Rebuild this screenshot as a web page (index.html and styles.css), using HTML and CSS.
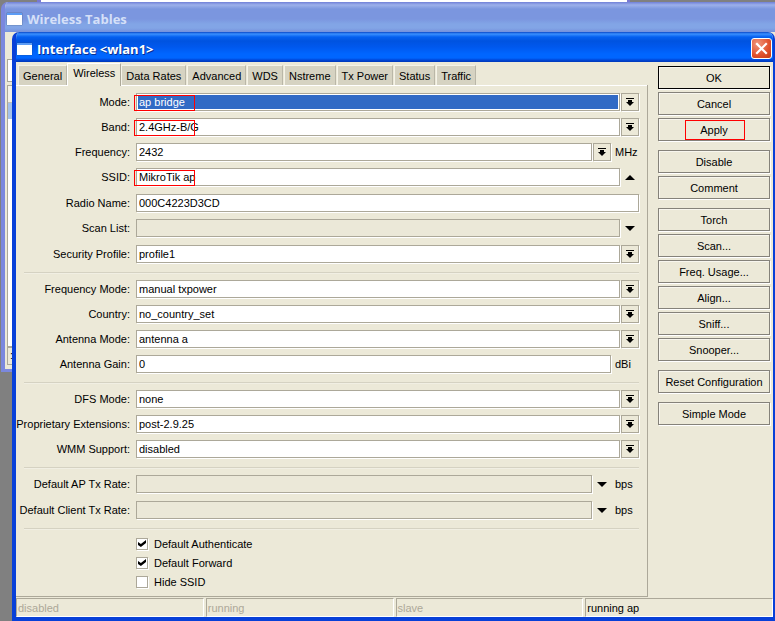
FILE: index.html
```html
<!DOCTYPE html>
<html lang="en">
<head>
<meta charset="utf-8">
<title>Interface &lt;wlan1&gt;</title>
<link rel="stylesheet" href="styles.css">
</head>
<body>
<div class="strip"></div>
<section class="back-window">
  <header class="titlebar inactive"><span class="app-icon"></span><h2>Wireless Tables</h2></header>
  <div class="back-body">
    <div class="back-tool"></div>
    <div class="back-list"><div class="back-head"></div><div class="back-selected"></div></div>
    <div class="back-status">:</div>
  </div>
</section>

<main class="window">
  <header class="titlebar">
    <span class="app-icon"></span><h1>Interface &lt;wlan1&gt;</h1>
    <button class="close" aria-label="Close"><svg viewBox="0 0 19 19" width="19" height="19"><path d="M5 5l9 9M14 5l-9 9" stroke="#fff" stroke-width="2.2" stroke-linecap="square"/></svg></button>
  </header>

  <div class="content">
    <div class="pane">
      <nav class="tabs">
        <button class="tab">General</button>
        <button class="tab active">Wireless</button>
        <button class="tab">Data Rates</button>
        <button class="tab">Advanced</button>
        <button class="tab">WDS</button>
        <button class="tab">Nstreme</button>
        <button class="tab">Tx Power</button>
        <button class="tab">Status</button>
        <button class="tab">Traffic</button>
      </nav>
      <form class="sheet">
        <div class="group">
          <div class="row marked"><label for="mode">Mode:</label><div class="field"><select id="mode" class="selected"><option>ap bridge</option></select><button type="button" class="drop" aria-label="Open mode"></button></div></div>
          <div class="row marked"><label for="band">Band:</label><div class="field"><select id="band"><option>2.4GHz-B/G</option></select><button type="button" class="drop" aria-label="Open band"></button></div></div>
          <div class="row"><label for="freq">Frequency:</label><div class="field"><select id="freq"><option>2432</option></select><button type="button" class="drop" aria-label="Open frequency"></button></div><span class="unit">MHz</span></div>
          <div class="row marked optional"><label for="ssid">SSID:</label><div class="field"><input id="ssid" type="text" value="MikroTik ap"><button type="button" class="toggle up" aria-label="Clear SSID"></button></div></div>
          <div class="row"><label for="radio">Radio Name:</label><div class="field"><input id="radio" type="text" value="000C4223D3CD"></div></div>
          <div class="row optional"><label for="scan">Scan List:</label><div class="field"><input id="scan" type="text" class="unset"><button type="button" class="toggle" aria-label="Set scan list"></button></div></div>
          <div class="row"><label for="sec">Security Profile:</label><div class="field"><select id="sec"><option>profile1</option></select><button type="button" class="drop" aria-label="Open security profile"></button></div></div>
        </div>
        <div class="group">
          <div class="row"><label for="fmode">Frequency Mode:</label><div class="field"><select id="fmode"><option>manual txpower</option></select><button type="button" class="drop" aria-label="Open frequency mode"></button></div></div>
          <div class="row"><label for="country">Country:</label><div class="field"><select id="country"><option>no_country_set</option></select><button type="button" class="drop" aria-label="Open country"></button></div></div>
          <div class="row"><label for="amode">Antenna Mode:</label><div class="field"><select id="amode"><option>antenna a</option></select><button type="button" class="drop" aria-label="Open antenna mode"></button></div></div>
          <div class="row"><label for="gain">Antenna Gain:</label><div class="field"><input id="gain" type="text" value="0"></div><span class="unit">dBi</span></div>
        </div>
        <div class="group">
          <div class="row"><label for="dfs">DFS Mode:</label><div class="field"><select id="dfs"><option>none</option></select><button type="button" class="drop" aria-label="Open DFS mode"></button></div></div>
          <div class="row"><label for="ext">Proprietary Extensions:</label><div class="field"><select id="ext"><option>post-2.9.25</option></select><button type="button" class="drop" aria-label="Open extensions"></button></div></div>
          <div class="row"><label for="wmm">WMM Support:</label><div class="field"><select id="wmm"><option>disabled</option></select><button type="button" class="drop" aria-label="Open WMM support"></button></div></div>
        </div>
        <div class="group">
          <div class="row optional"><label for="aprate">Default AP Tx Rate:</label><div class="field"><input id="aprate" type="text" class="unset"><button type="button" class="toggle" aria-label="Set AP rate"></button></div><span class="unit">bps</span></div>
          <div class="row"><label for="clrate">Default Client Tx Rate:</label><div class="field"><input id="clrate" type="text" class="unset"><button type="button" class="toggle" aria-label="Set client rate"></button></div><span class="unit">bps</span></div>
        </div>
        <div class="group checks">
          <label><input type="checkbox" checked>Default Authenticate</label>
          <label><input type="checkbox" checked>Default Forward</label>
          <label><input type="checkbox">Hide SSID</label>
        </div>
      </form>
    </div>
    <aside class="actions">
      <div><button class="default">OK</button><button>Cancel</button><button class="apply">Apply</button></div>
      <div><button>Disable</button><button>Comment</button></div>
      <div><button>Torch</button><button>Scan...</button><button>Freq. Usage...</button><button>Align...</button><button>Sniff...</button><button>Snooper...</button></div>
      <div><button>Reset Configuration</button></div>
      <div><button>Simple Mode</button></div>
    </aside>
  </div>

  <footer class="status"><span>disabled</span><span>running</span><span>slave</span><span class="on">running ap</span></footer>
</main>
</body>
</html>
```
FILE: styles.css
```css
*, *::before, *::after { box-sizing: border-box; }
body {
  margin: 0;
  padding: 32px 0 0 12px;
  background: #808080;
  color: #000;
  font: 11px/14px "Liberation Sans", Arial, sans-serif;
  overflow: hidden;
}
button, input, select { font: inherit; color: inherit; margin: 0; padding: 0; border-radius: 0; }
h1, h2 { margin: 0; font: bold 13px/16px "Open Sans", "Noto Sans", sans-serif; }

/* Windows behind the dialog */
.strip { position: absolute; top: 0; left: 37px; width: 593px; height: 3px; background: #fff; border: solid #7a78d0; border-width: 0 3px 0 4px; }
.back-window {
  position: absolute; top: 2px; left: 1px; right: 0; height: 370px;
  border: solid #7b88de; border-width: 0 0 3px 4px; border-radius: 7px 0 0 0;
  background: #ece9d8; overflow: hidden;
}
.back-body { padding: 27px 0 0 2px; width: 10px; }
.back-tool { height: 23px; border: 1px solid #aca899; background: #fff; }
.back-list { height: 262px; margin-top: 3px; border: 1px solid #aca899; background: #fff; }
.back-head { height: 17px; background: #f4f2e8; border-bottom: 1px solid #c5c2b4; }
.back-selected { height: 16px; background: #a5c1ea; }
.back-status { height: 18px; padding-left: 2px; border: 1px solid #aca899; overflow: hidden; }

.titlebar {
  display: flex; align-items: center; gap: 5px; height: 30px; padding: 3px 3px 0 5px;
  background: linear-gradient(#0a48c8 0, #3a90ff 2px, #0560f0 5px, #0053e0 9px, #0058ee 15px, #0066ff 22px, #0066ff 26px, #0047d8 28px, #0038b8 30px);
  color: #fff; text-shadow: 1px 1px 0 #0a2f90;
}
.titlebar.inactive {
  padding: 3px 2px 0;
  background: linear-gradient(#7080d8 0, #9cb0ea 3px, #7b96df 7px, #7b96df 17px, #82a5e6 22px, #82a5e6 26px, #7691dc 30px);
  color: #d5e0f8; text-shadow: none;
}
.app-icon { width: 15px; height: 12px; background: #fff; border-top: 2px solid #5c9cf5; box-shadow: 0 0 1px #345; }
.close {
  display: flex; width: 21px; height: 21px; margin-left: auto;
  border: 1px solid #fff; border-radius: 3px;
  background: radial-gradient(circle at 30% 25%, #f0967c, #e0502c 60%, #c33c16);
}

/* Dialog */
.window { position: relative; border: solid #0840d8; border-width: 0 2px 4px 4px; border-radius: 7px 7px 0 0; background: #ece9d8; overflow: hidden; }
.window > .titlebar { margin: 0 -2px 0 -4px; }
.content { display: flex; gap: 10px; padding-right: 3px; }
.pane { flex: 1; padding-top: 1px; }

.tabs { display: flex; align-items: flex-end; gap: 1px; height: 22px; padding-left: 2px; }
.tab { height: 20px; padding: 0 4px; border: 0; border-top: 1px solid #f5f3e8; border-right: 1px solid #bab7a8; border-left: 1px solid #f5f3e8; background: #d6d3c2; }
.tab.active { height: 23px; margin: 0 -1px -1px; padding: 0 5px 4px; border-color: #fff #aca899 #fff #fff; background: #ece9d8; position: relative; }

.sheet { padding: 4px 8px 5px; border: solid #aca899; border-width: 0 1px 1px 0; box-shadow: inset 0 1px 0 #fff; }
.group + .group { margin-top: 6px; padding-top: 3px; border-top: 1px solid #d5d2c2; box-shadow: inset 0 1px 0 #f1efe3; }
.row { display: flex; align-items: center; gap: 6px; height: 25px; }
.row.optional { margin-bottom: 1px; }
.row > label { display: flex; justify-content: flex-end; width: 106px; white-space: nowrap; }
.field { position: relative; display: flex; flex: 1; gap: 1px; }
.unit { width: 24px; margin-left: -2px; }

.field input, .field select {
  flex: 1; min-width: 0; height: 18px; padding: 0 2px;
  border: 1px solid #aca899; background: #fff; box-shadow: 1px 1px 0 #fff;
  appearance: none; outline: 0;
}
.field .unset { background: #ebe8d8; }
.field .selected { color: #fff; background: #316ac5; box-shadow: inset 0 0 0 1px #fff, 1px 1px 0 #fff; }
.drop, .toggle { position: relative; width: 18px; height: 18px; border: 0; background: none; }
.drop { border: 1px solid #aca899; box-shadow: 1px 1px 0 #fff; }
.drop::before { content: ""; position: absolute; inset: 4px 4px auto; height: 5px; border-top: 1px solid #000; background: linear-gradient(#000, #000) center bottom / 4px 3px no-repeat; }
.drop::after { content: ""; position: absolute; top: 8px; left: 4px; border: 4px solid transparent; border-top-color: #000; border-bottom: 0; }
.toggle::after { content: ""; position: absolute; top: 7px; left: 4px; border: 5px solid transparent; border-top-color: #000; border-bottom: 0; }
.toggle.up::after { border: 5px solid transparent; border-bottom-color: #000; border-top: 0; }
.marked .field::after, .apply::after { content: ""; position: absolute; border: 1px solid #f00; pointer-events: none; }
.marked .field::after { top: 2px; left: -2px; width: 61px; height: 16px; }

.group.checks { padding: 5px 0 0 112px; }
.checks label { display: flex; align-items: center; gap: 6px; height: 19px; }
.checks input { appearance: none; width: 12px; height: 12px; border: 1px solid #aca899; background: #fff; box-shadow: 1px 1px 0 #fff; display: grid; place-items: center; }
.checks input:checked::after { content: ""; width: 8px; height: 7px; background: #000; clip-path: polygon(0 28%, 36% 58%, 100% 0, 100% 42%, 36% 100%, 0 72%); }

.actions { display: flex; flex-direction: column; gap: 9px; width: 112px; padding-top: 4px; }
.actions div { display: flex; flex-direction: column; gap: 3px; }
.actions button { position: relative; height: 23px; border: 1px solid #85827a; background: #ece9d8; box-shadow: 1px 1px 0 #fff, inset 1px 1px 0 #f8f6ee; white-space: nowrap; }
.actions .default { border-color: #000; }
.apply::after { top: 1px; left: 26px; right: 24px; height: 20px; }

.status { display: flex; gap: 2px; padding-top: 1px; }
.status span { flex: 1; height: 19px; padding: 2px 1px 0; border: 1px solid; border-color: #aca899 #fff #fff #aca899; color: #aca899; }
.status .on { color: #000; }
```
